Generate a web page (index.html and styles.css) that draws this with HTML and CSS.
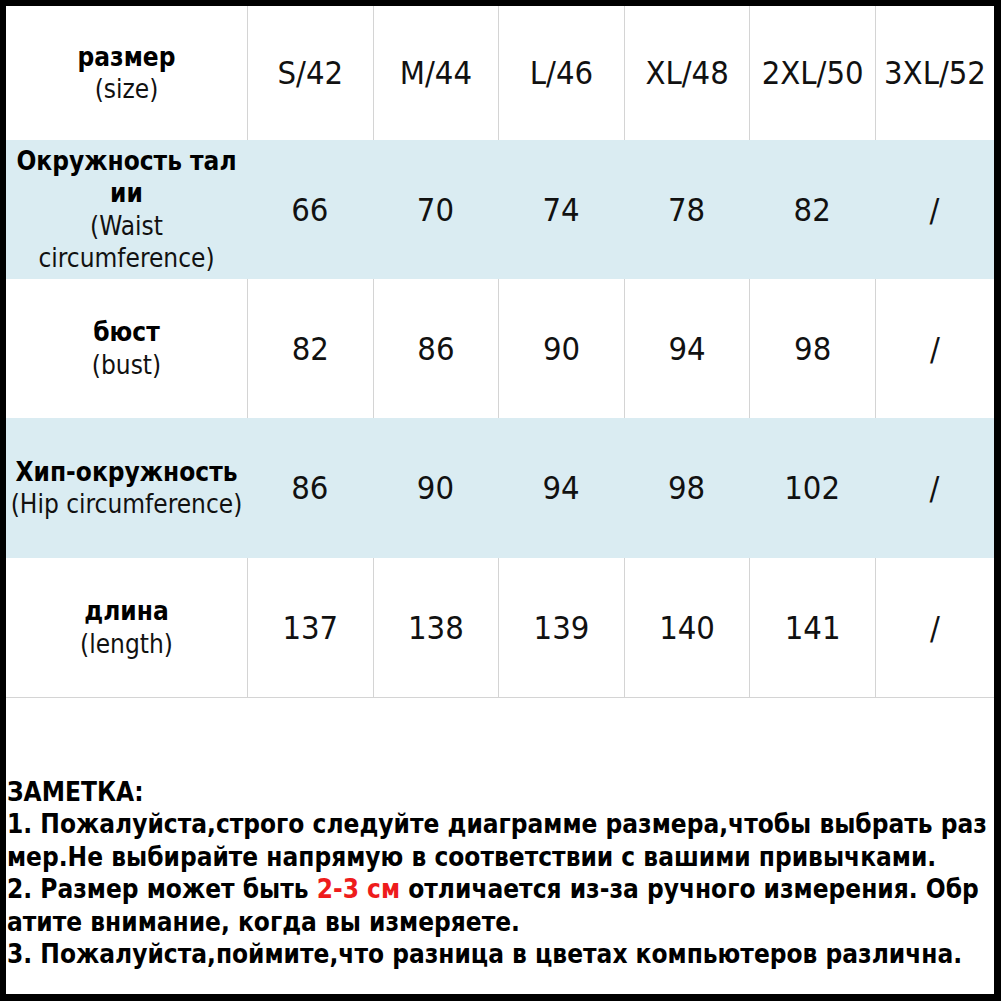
FILE: index.html
```html
<!DOCTYPE html>
<html lang="ru">
<head>
<meta charset="utf-8">
<title>Размерная таблица</title>
<link rel="stylesheet" href="styles.css">
</head>
<body>
<div class="sheet">
  <div class="chart">
    <div class="row row-head">
      <div class="cell label"><span class="ru">размер</span><span class="en">(size)</span></div>
      <div class="cell val">S/42</div>
      <div class="cell val">M/44</div>
      <div class="cell val">L/46</div>
      <div class="cell val">XL/48</div>
      <div class="cell val">2XL/50</div>
      <div class="cell val">3XL/52</div>
    </div>
    <div class="row row-tint row-r1">
      <div class="cell label"><span class="ru">Окружность тал</span><span class="ru">ии</span><span class="en">(Waist</span><span class="en">circumference)</span></div>
      <div class="cell val">66</div>
      <div class="cell val">70</div>
      <div class="cell val">74</div>
      <div class="cell val">78</div>
      <div class="cell val">82</div>
      <div class="cell val">/</div>
    </div>
    <div class="row row-r2">
      <div class="cell label"><span class="ru">бюст</span><span class="en">(bust)</span></div>
      <div class="cell val">82</div>
      <div class="cell val">86</div>
      <div class="cell val">90</div>
      <div class="cell val">94</div>
      <div class="cell val">98</div>
      <div class="cell val">/</div>
    </div>
    <div class="row row-tint row-r3">
      <div class="cell label"><span class="ru">Хип-окружность</span><span class="en">(Hip circumference)</span></div>
      <div class="cell val">86</div>
      <div class="cell val">90</div>
      <div class="cell val">94</div>
      <div class="cell val">98</div>
      <div class="cell val">102</div>
      <div class="cell val">/</div>
    </div>
    <div class="row row-r4">
      <div class="cell label"><span class="ru">длина</span><span class="en">(length)</span></div>
      <div class="cell val">137</div>
      <div class="cell val">138</div>
      <div class="cell val">139</div>
      <div class="cell val">140</div>
      <div class="cell val">141</div>
      <div class="cell val">/</div>
    </div>
  </div>
  <div class="notes">
    <p class="line">ЗАМЕТКА:</p>
    <p class="line">1. Пожалуйста,строго следуйте диаграмме размера,чтобы выбрать раз</p>
    <p class="line">мер.Не выбирайте напрямую в соответствии с вашими привычками.</p>
    <p class="line">2. Размер может быть <span class="red">2-3 см</span> отличается из-за ручного измерения. Обр</p>
    <p class="line">атите внимание, когда вы измеряете.</p>
    <p class="line">3. Пожалуйста,поймите,что разница в цветах компьютеров различна.</p>
  </div>
</div>
</body>
</html>
```
FILE: styles.css
```css
html, body {
  margin: 0;
  padding: 0;
  background: #000;
}
body {
  font-family: "DejaVu Sans", "Liberation Sans", sans-serif;
  font-stretch: condensed;
  color: #111;
}
.sheet {
  width: 1001px;
  height: 1001px;
  box-sizing: border-box;
  border-style: solid;
  border-color: #000;
  border-width: 6px 7px 7px 6px;
  background: #fff;
  display: flex;
  flex-direction: column;
}
.chart {
  display: flex;
  flex-direction: column;
}
.row {
  display: grid;
  grid-template-columns: 241px repeat(5, 125.6px) 1fr;
  height: 139px;
}
.row-head { height: 134px; }
.row-r3 { height: 140px; }
.row-r4 { border-bottom: 1px solid #d4d4d4; }
.row-tint { background: #daecf2; }
.row-head .val, .row-r2 .val, .row-r4 .val {
  border-left: 1px solid #d4d4d4;
}
.cell {
  display: flex;
  flex-direction: column;
  align-items: center;
  justify-content: center;
  text-align: center;
  white-space: nowrap;
}
.label {
  font-size: 26px;
  line-height: 32.5px;
}
.label .ru {
  font-weight: bold;
  color: #000;
}
.val {
  font-size: 32.5px;
}
.notes {
  padding: 78px 0 0 1px;
  font-size: 26px;
  font-weight: bold;
  color: #000;
}
.line {
  margin: 0;
  line-height: 32.4px;
  white-space: nowrap;
}
.red { color: #ee1c1c; }
```
